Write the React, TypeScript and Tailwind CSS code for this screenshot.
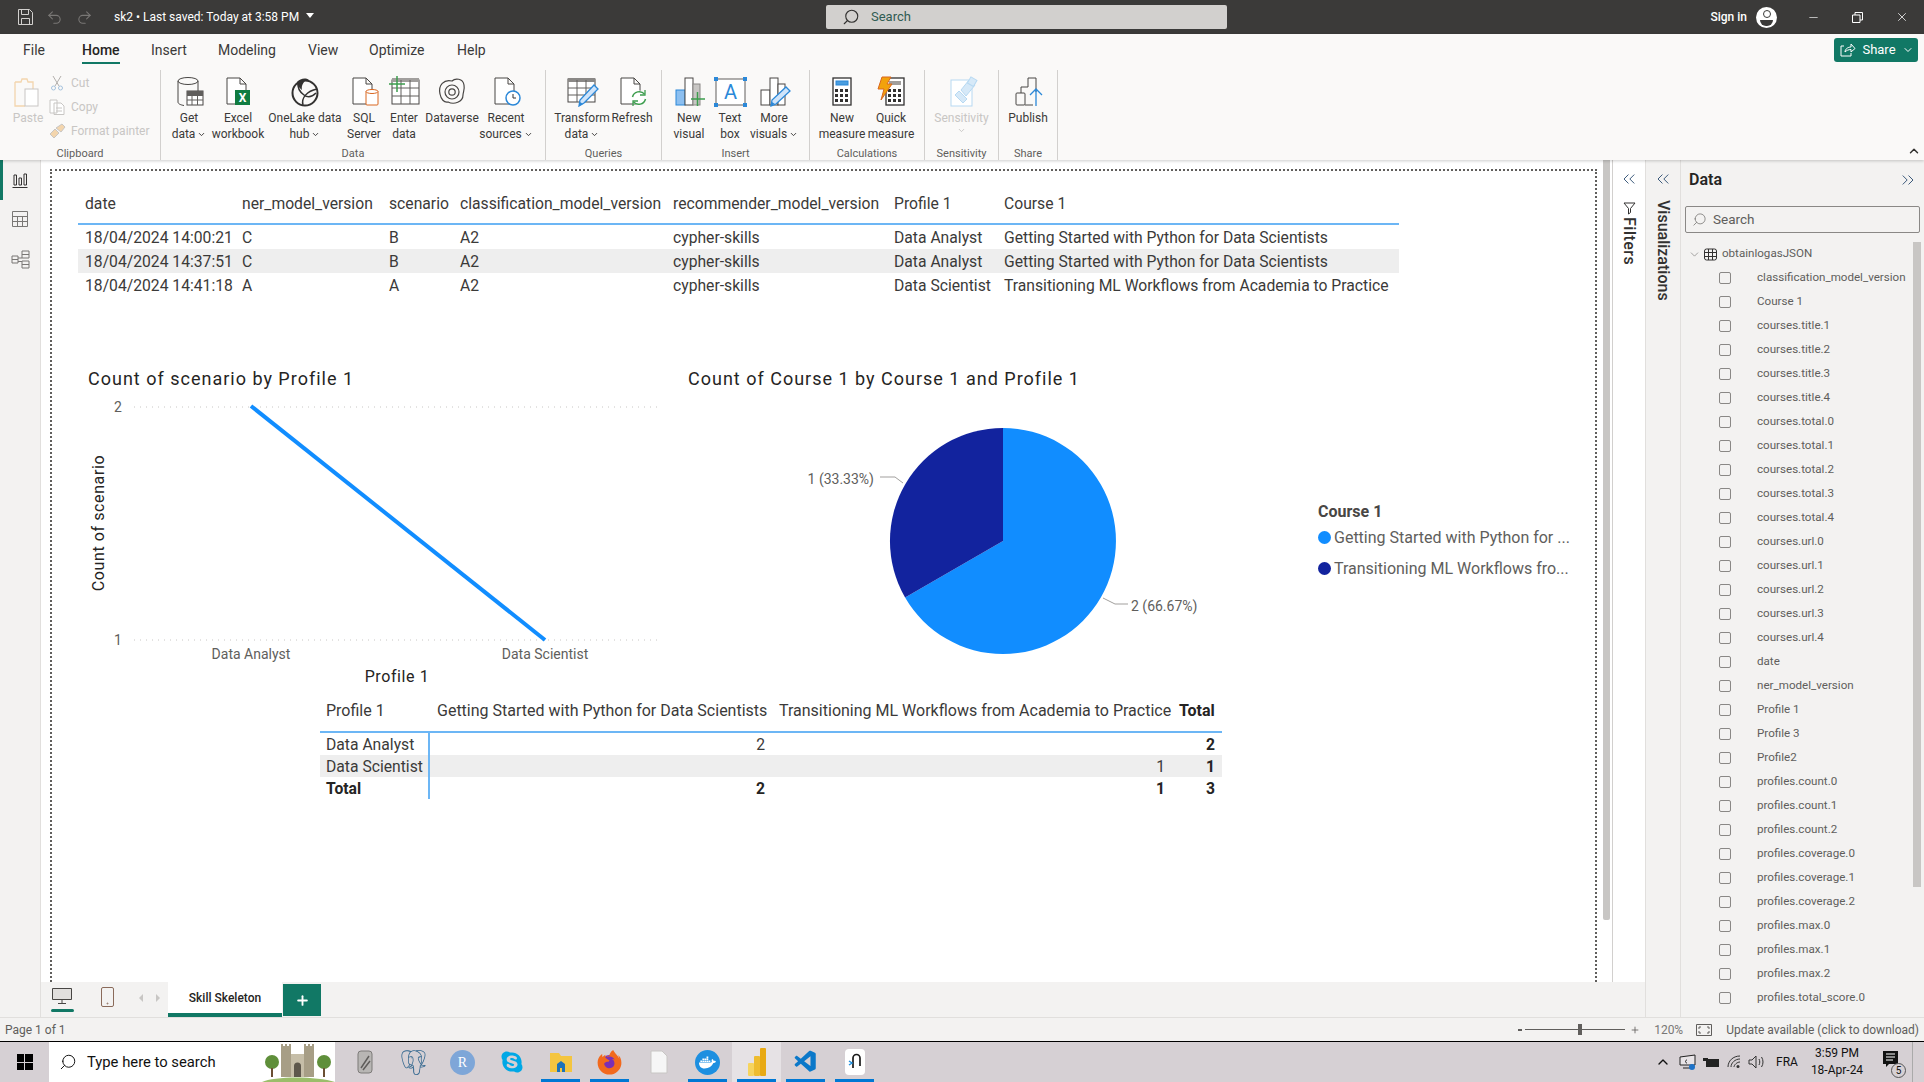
import type { ReactNode } from "react";
import {
  ChevronDown,
  ChevronUp,
  ChevronsLeft,
  ChevronsRight,
  Minus,
  Plus,
  Redo2,
  Search,
  Undo2,
  X,
} from "lucide-react";
import { FaDocker, FaFirefoxBrowser, FaSkype } from "react-icons/fa";
import { SiPostgresql } from "react-icons/si";
import { VscVscode } from "react-icons/vsc";

const Ic = ({ w = 34, children }: { w?: number; children: ReactNode }) => (
  <svg width={w} height={32} viewBox={`0 0 ${w} 32`} fill="none" stroke="#484644" strokeWidth="1">
    {children}
  </svg>
);

const Doc = ({ stroke = "#484644" }: { stroke?: string }) => (
  <path d="M6 3h13l6 6v20H6zM19 3v6h6" stroke={stroke} fill="#fff" />
);

const GetDataIcon = () => (
  <Ic>
    <g transform="translate(2 0)">
      <ellipse cx="14" cy="6" rx="10" ry="3.5" />
      <path d="M4 6v21c0 2 3 3 6 3.5M24 6v10" />
      <rect x="13" y="16" width="16" height="14" fill="#fff" stroke="#484644" />
      <path d="M13 20.500h16M13 25h16M18 16v14M23.500 16v14" stroke="#605e5c" />
      <rect x="13" y="16" width="16" height="4" fill="#605e5c" stroke="none" />
    </g>
  </Ic>
);

const ExcelIcon = () => (
  <Ic>
    <Doc />
    <rect x="14" y="15" width="15" height="15" fill="#107c41" stroke="none" />
    <text x="21.500" y="27" textAnchor="middle" fontSize="12" fontWeight="700" fill="#fff" stroke="none" fontFamily="Roboto, sans-serif">
      X
    </text>
  </Ic>
);

const OneLakeIcon = () => (
  <Ic>
    <circle cx="17" cy="18" r="12.500" stroke="#323130" strokeWidth="2" />
    <path d="M10 7a14 14 0 0 0 6 13c4 3 8 2 12-2M15 30c-2-7 4-14 14-16" stroke="#323130" strokeWidth="1.500" />
    <path d="M9 7c3-3 8-5 12-2-5 0-8 5-7 10-3-2-5-5-5-8z" fill="#323130" stroke="none" />
  </Ic>
);

const SqlIcon = () => (
  <Ic>
    <Doc />
    <rect x="19" y="16" width="12" height="14" rx="1" fill="#fff" stroke="#d9661f" />
    <ellipse cx="25" cy="16.500" rx="6" ry="2" fill="#fff" stroke="#d9661f" />
  </Ic>
);

const EnterIcon = () => (
  <Ic>
    <rect x="5" y="5" width="27" height="24" fill="#fff" />
    <rect x="5" y="3" width="27" height="4" fill="#a19f9d" stroke="none" />
    <path d="M5 13h27M5 21h27M14 5v24M23 5v24" stroke="#605e5c" />
    <path d="M2 9h16M10 1v16" stroke="#3d9d4e" strokeWidth="1.500" />
  </Ic>
);

const DataverseIcon = () => (
  <Ic>
    <path d="M5 19c-2-9 4-15 12-13 3-3 11-3 12 4 1 5-1 7-1 10 0 7-9 10-15 7-4 1-7-3-8-8z" strokeWidth="1.200" />
    <circle cx="17" cy="17" r="7" strokeWidth="1.200" />
    <circle cx="17" cy="17" r="3.200" strokeWidth="1.200" />
  </Ic>
);

const RecentIcon = () => (
  <Ic>
    <Doc />
    <circle cx="24" cy="23" r="7" fill="#fff" stroke="#2b88d8" strokeWidth="1.500" />
    <path d="M24 19v4h3" stroke="#323130" />
  </Ic>
);

const TransformIcon = () => (
  <Ic>
    <rect x="3" y="4" width="27" height="23" fill="#fff" />
    <rect x="3" y="3" width="27" height="4" fill="#8a8886" stroke="none" />
    <path d="M3 13h27M3 20h27M12 5v22M21 5v22" stroke="#605e5c" />
    <path d="M14 31l1-6 14-15 4 4-14 14z" fill="#cfe4fa" stroke="#2b88d8" strokeWidth="1.300" />
    <path d="M14 31l1-4 3 2z" fill="#2b88d8" stroke="none" />
  </Ic>
);

const RefreshIcon = () => (
  <Ic>
    <Doc />
    <circle cx="24" cy="23" r="7.500" fill="#fff" stroke="none" />
    <path d="M17.500 22a7 7 0 0 1 12-3M30.500 24a7 7 0 0 1-12 3" stroke="#3d9d4e" strokeWidth="1.500" />
    <path d="M30 15v5h-5M18 31v-5h5" stroke="#3d9d4e" strokeWidth="1.300" />
  </Ic>
);

const NewVisualIcon = () => (
  <Ic>
    <rect x="4" y="15" width="9" height="15" fill="#8cbff0" stroke="#2b88d8" />
    <rect x="13" y="3" width="8" height="27" fill="#fff" />
    <rect x="21" y="9" width="7" height="21" fill="#c8c6c4" stroke="#8a8886" />
    <path d="M19 24h14M25.500 17v14" stroke="#3d9d4e" strokeWidth="1.500" />
  </Ic>
);

const TextBoxIcon = () => (
  <Ic>
    <rect x="3" y="4" width="29" height="26" fill="#fff" stroke="#605e5c" />
    {[
      [1, 2],
      [30, 2],
      [1, 28],
      [30, 28],
    ].map(([x, y]) => (
      <rect key={x * 100 + y} x={x} y={y} width="4" height="4" fill="#2b88d8" stroke="none" />
    ))}
    <text x="17.500" y="24" textAnchor="middle" fontSize="20" fill="#2b88d8" stroke="none" fontFamily="Roboto, sans-serif">
      A
    </text>
  </Ic>
);

const MoreVisualsIcon = () => (
  <Ic>
    <rect x="4" y="15" width="9" height="15" fill="#fff" />
    <rect x="13" y="3" width="8" height="27" fill="#fff" />
    <rect x="21" y="9" width="7" height="21" fill="#fff" />
    <path d="M14 31l1-6 14-13 4 4-14 13z" fill="#cfe4fa" stroke="#2b88d8" strokeWidth="1.300" />
    <path d="M14 31l1-4 3 2z" fill="#2b88d8" stroke="none" />
  </Ic>
);

const Calc = ({ x }: { x: number }) => (
  <>
    <rect x={x} y="3" width="18" height="27" fill="#fff" stroke="#323130" strokeWidth="1.300" />
    {[14, 19, 24].map((y) =>
      [3, 8, 13].map((d) => <rect key={`${y}-${d}`} x={x + d - 1} y={y} width="3" height="3" fill="#323130" stroke="none" />),
    )}
  </>
);

const NewMeasureIcon = () => (
  <Ic>
    <Calc x={8} />
    <rect x="11" y="6" width="12" height="4" fill="#4a9ee0" stroke="#2b88d8" />
  </Ic>
);

const QuickMeasureIcon = () => (
  <Ic>
    <Calc x={12} />
    <rect x="15" y="6" width="12" height="4" fill="#a19f9d" stroke="none" />
    <path d="M8 2h9l-4 7h5L7 25l3-11H4z" fill="#f2a20c" stroke="#d9661f" />
  </Ic>
);

const SensitivityIcon = () => (
  <Ic>
    <rect x="6" y="5" width="21" height="26" fill="#fff" stroke="#b7d9f2" />
    <path d="M10 20l8 8 4-4-8-8z" fill="#d6e9f8" stroke="#b7d9f2" />
    <path d="M16 15l8-10 6 5-9 11z" fill="#d6e9f8" stroke="#b7d9f2" />
    <rect x="24" y="3" width="7" height="7" fill="#d6e9f8" stroke="#b7d9f2" transform="rotate(30 27 6)" />
  </Ic>
);

const PublishIcon = () => (
  <Ic>
    <rect x="5" y="18" width="9" height="12" rx="1" />
    <path d="M10 18v-6h7V3h8v14" />
    <path d="M14 30h8" />
    <path d="M25 31V14M19 20l6-6 6 6" stroke="#2b88d8" strokeWidth="1.300" />
  </Ic>
);

const PasteIcon = () => (
  <Ic>
    <path d="M4 7h6l1-3h5l1 3h5v7" stroke="#f3d5ad" strokeWidth="1.300" />
    <path d="M4 7v24h10" stroke="#f3d5ad" strokeWidth="1.300" />
    <rect x="14" y="14" width="13" height="17" fill="#fff" stroke="#c8c6c4" />
  </Ic>
);

type RibbonItem = { icon: ReactNode; lines: string[]; width: number; caret?: boolean; off?: boolean };

const RibbonButton = ({ item }: { item: RibbonItem }) => (
  <div className="flex flex-col items-center pt-[5px] shrink-0" style={{ width: item.width }}>
    <div className="h-[35px] flex items-start justify-center">{item.icon}</div>
    <div className={`text-center text-[12px] leading-[16px] whitespace-nowrap ${item.off ? "text-[#c8c6c4]" : "text-[#3b3a39]"}`}>
      {item.lines.map((line, i) => (
        <div key={i} className="flex items-center justify-center gap-[2px]">
          {line}
          {item.caret && i === item.lines.length - 1 && <ChevronDown size={9} strokeWidth={2.500} />}
        </div>
      ))}
    </div>
  </div>
);

const RibbonGroup = ({ label, width, pl = 0, children }: { label: string; width: number; pl?: number; children: ReactNode }) => (
  <div className="h-[90px] flex flex-col border-r border-[#d2d0ce] shrink-0" style={{ width }}>
    <div className="flex flex-1 min-h-0" style={{ paddingLeft: pl }}>
      {children}
    </div>
    <div className="h-[12px] leading-[12px] text-[11px] text-[#605e5c] text-center">{label}</div>
  </div>
);

const tabs = [
  { name: "File", width: 59 },
  { name: "Home", width: 69, active: true },
  { name: "Insert", width: 67 },
  { name: "Modeling", width: 90 },
  { name: "View", width: 61 },
  { name: "Optimize", width: 88 },
  { name: "Help", width: 40 },
];

const dataGroup: RibbonItem[] = [
  { icon: <GetDataIcon />, lines: ["Get", "data"], width: 48, caret: true },
  { icon: <ExcelIcon />, lines: ["Excel", "workbook"], width: 50 },
  { icon: <OneLakeIcon />, lines: ["OneLake data", "hub"], width: 84, caret: true },
  { icon: <SqlIcon />, lines: ["SQL", "Server"], width: 34 },
  { icon: <EnterIcon />, lines: ["Enter", "data"], width: 46 },
  { icon: <DataverseIcon />, lines: ["Dataverse"], width: 50 },
  { icon: <RecentIcon />, lines: ["Recent", "sources"], width: 58, caret: true },
];

const TitleBar = () => (
  <header className="h-[34px] bg-[#3b3a39] flex items-center text-white shrink-0">
    <div className="w-[826px] flex items-center shrink-0">
      <svg className="ml-[18px]" width="15" height="16" viewBox="0 0 15 16" fill="none" stroke="#d2d0ce">
        <path d="M.5.5h11l3 3v12H.5zM3.500.5v5h7v-5M3.500 15.500v-6h8v6" />
      </svg>
      <Undo2 className="ml-[13px] text-[#797775]" size={17} strokeWidth={1.500} />
      <Redo2 className="ml-[13px] text-[#797775]" size={17} strokeWidth={1.500} />
      <span className="ml-[21px] text-[12px]">sk2 • Last saved: Today at 3:58 PM</span>
      <span className="ml-[7px] mb-[4px] w-0 h-0 border-x-[4px] border-x-transparent border-t-[5px] border-t-white" />
    </div>
    <div className="w-[401px] h-[24px] rounded-[2px] bg-[#d2d0ce] flex items-center pl-[16px] gap-[11px] text-[#2f5c52] text-[13px] shrink-0">
      <Search size={18} className="text-[#323130] -scale-x-100" strokeWidth={1.500} />
      Search
    </div>
    <div className="flex-1 flex items-center justify-end">
      <span className="text-[12px] mr-[9px] font-medium">Sign in</span>
      <span className="w-[21px] h-[21px] rounded-full bg-white relative overflow-hidden flex justify-center">
        <span className="mt-[3px] w-[8px] h-[8px] rounded-full border-[1.500px] border-[#3b3a39]" />
        <span className="absolute bottom-[2px] w-[13px] h-[6px] rounded-b-full bg-[#3b3a39]" />
      </span>
      <Minus className="ml-[30px]" size={13} strokeWidth={1.200} />
      <svg className="ml-[32px]" width="11" height="11" viewBox="0 0 11 11" fill="none" stroke="#fff">
        <path d="M.5 3h7.500v7.500H.5zM3 3V.5h7.500V8H8" />
      </svg>
      <X className="ml-[32px] mr-[15px]" size={14} strokeWidth={1.300} />
    </div>
  </header>
);

const Ribbon = () => (
  <section className="h-[126px] bg-[#faf9f8] shrink-0 shadow-[0_1px_3px_rgba(0,0,0,0.2)] relative z-10">
    <div className="h-[36px] flex items-start justify-between">
      <nav className="flex pl-[23px] pt-[6px]">
        {tabs.map((tab) => (
          <div key={tab.name} className="shrink-0 text-[14px] text-[#3b3a39]" style={{ width: tab.width }}>
            <span className={`inline-block leading-[20px] pb-[2px] ${tab.active ? "border-b-2 border-[#117865] font-medium text-[#252423]" : ""}`}>
              {tab.name}
            </span>
          </div>
        ))}
      </nav>
      <button className="mt-[4px] mr-[6px] w-[84px] h-[24px] rounded-[3px] bg-[#117865] text-white text-[13px] flex items-center justify-center gap-[6px] pl-[2px]">
        <svg width="16" height="14" viewBox="0 0 16 14" fill="none" stroke="#fff">
          <path d="M4 3H1v10h10v-3M5 9c0-3 3-5 6-5V1l4 4.500L11 9V6.500C8.500 6.500 6.500 7.500 5 9z" />
        </svg>
        Share
        <ChevronDown size={12} />
      </button>
    </div>
    <div className="h-[90px] flex items-start">
      <RibbonGroup label="Clipboard" width={161}>
        <div className="w-[50px] pl-[6px] shrink-0 flex flex-col items-center pt-[5px]">
          <PasteIcon />
          <span className="mt-[3px] text-[12px] leading-[16px] text-[#c8c6c4]">Paste</span>
        </div>
        <div className="pt-[5px] flex flex-col gap-[8px] text-[12px] leading-[16px] text-[#c8c6c4] whitespace-nowrap">
          <div className="flex items-center gap-[5px]">
            <svg width="14" height="16" viewBox="0 0 14 16" fill="none" stroke="#a6c3de">
              <path d="M3 1l6 10M11 1L5 11" stroke="#b3b0ad" />
              <circle cx="3.500" cy="13" r="2" />
              <circle cx="10.500" cy="13" r="2" />
            </svg>
            <span className="ml-[2px]">Cut</span>
          </div>
          <div className="flex items-center gap-[5px]">
            <svg className="-ml-[1px]" width="17" height="16" viewBox="0 0 17 16" fill="none" stroke="#c8c6c4">
              <path d="M1 1h7v13H1zM5 4h7l3 3v8.500H5zM7 9h6M7 12h6" fill="#fff" />
            </svg>
            Copy
          </div>
          <div className="flex items-center gap-[5px]">
            <svg className="-ml-[1px]" width="17" height="16" viewBox="0 0 17 16" fill="#f3d5ad" stroke="#c8c6c4">
              <path d="M1 11l5-5 4 4-5 5zM7 5l6-4 3 3-4 5z" />
            </svg>
            Format painter
          </div>
        </div>
      </RibbonGroup>
      <RibbonGroup label="Data" width={385} pl={4}>
        {dataGroup.map((item) => (
          <RibbonButton key={item.lines[0]} item={item} />
        ))}
      </RibbonGroup>
      <RibbonGroup label="Queries" width={116} pl={8}>
        <RibbonButton item={{ icon: <TransformIcon />, lines: ["Transform", "data"], width: 56, caret: true }} />
        <RibbonButton item={{ icon: <RefreshIcon />, lines: ["Refresh"], width: 44 }} />
      </RibbonGroup>
      <RibbonGroup label="Insert" width={148} pl={7}>
        <RibbonButton item={{ icon: <NewVisualIcon />, lines: ["New", "visual"], width: 40 }} />
        <RibbonButton item={{ icon: <TextBoxIcon />, lines: ["Text", "box"], width: 42 }} />
        <RibbonButton item={{ icon: <MoreVisualsIcon />, lines: ["More", "visuals"], width: 46, caret: true }} />
      </RibbonGroup>
      <RibbonGroup label="Calculations" width={115} pl={5}>
        <RibbonButton item={{ icon: <NewMeasureIcon />, lines: ["New", "measure"], width: 54 }} />
        <RibbonButton item={{ icon: <QuickMeasureIcon />, lines: ["Quick", "measure"], width: 44 }} />
      </RibbonGroup>
      <RibbonGroup label="Sensitivity" width={74}>
        <RibbonButton item={{ icon: <SensitivityIcon />, lines: ["Sensitivity", ""], width: 73, caret: true, off: true }} />
      </RibbonGroup>
      <RibbonGroup label="Share" width={59}>
        <RibbonButton item={{ icon: <PublishIcon />, lines: ["Publish"], width: 58 }} />
      </RibbonGroup>
      <div className="flex-1 h-[88px] flex items-end justify-end pr-[3px]">
        <ChevronUp size={14} strokeWidth={2.500} className="text-[#323130]" />
      </div>
    </div>
  </section>
);

const LeftRail = () => (
  <aside className="w-[41px] bg-[#f3f2f1] border-r border-[#e1dfdd] shrink-0 relative flex flex-col items-center pt-[12px] gap-[23px]">
    <span className="absolute left-0 top-0 w-[3px] h-[40px] bg-[#117865]" />
    <svg width="16" height="16" viewBox="0 0 16 16" fill="none" stroke="#323130">
      <path d="M.5 15.500h15M2 13V3h2.500v10zM7 13V6h2.500v7zM12 13V2h2.500v11z" />
    </svg>
    <svg width="16" height="16" viewBox="0 0 16 16" fill="none" stroke="#797775">
      <path d="M.5.5h15v15H.5zM.5 5.500h15M.5 10.500h15M5.500 5.500v10M10.500 5.500v10" />
    </svg>
    <svg width="19" height="19" viewBox="0 0 19 19" fill="none" stroke="#797775">
      <path d="M1 6h6v7H1zM1 9.500h6M11 1h7v7h-7zM11 4.500h7M11 11h7v7h-7zM11 14.500h7M7 8h4M7 11.500h4" />
    </svg>
  </aside>
);

const columns = ["date", "ner_model_version", "scenario", "classification_model_version", "recommender_model_version", "Profile 1", "Course 1"];
const rows = [
  ["18/04/2024 14:00:21", "C", "B", "A2", "cypher-skills", "Data Analyst", "Getting Started with Python for Data Scientists"],
  ["18/04/2024 14:37:51", "C", "B", "A2", "cypher-skills", "Data Analyst", "Getting Started with Python for Data Scientists"],
  ["18/04/2024 14:41:18", "A", "A", "A2", "cypher-skills", "Data Scientist", "Transitioning ML Workflows from Academia to Practice"],
];

const LogTable = () => (
  <div className="ml-[26px] mt-[21px] w-[1321px] text-[15.700px] text-[#3b3a39]">
    <div className="grid grid-cols-[157px_147px_71px_213px_221px_110px_402px] h-[33px] border-b-2 border-[#6cb6f5]">
      {columns.map((col) => (
        <div key={col} className="pl-[7px] leading-[24px] whitespace-nowrap">
          {col}
        </div>
      ))}
    </div>
    {rows.map((row, i) => (
      <div key={row[0]} className={`grid grid-cols-[157px_147px_71px_213px_221px_110px_402px] h-[24px] ${i === 1 ? "bg-[#eeeeee]" : ""}`}>
        {row.map((cell, j) => (
          <div key={j} className="pl-[7px] pt-[1px] leading-[24px] whitespace-nowrap">
            {cell}
          </div>
        ))}
      </div>
    ))}
  </div>
);

const ChartTitle = ({ children }: { children: ReactNode }) => (
  <div className="h-[26px] leading-[26px] text-[18px] tracking-[1px] text-[#252423] whitespace-nowrap">{children}</div>
);

const LineChart = () => (
  <div className="w-[610px] shrink-0">
    <div className="pl-[10px]">
      <ChartTitle>Count of scenario by Profile 1</ChartTitle>
    </div>
    <svg width="610" height="296" viewBox="78 392 610 296" fontFamily="Roboto, sans-serif">
      <line x1="134" y1="407" x2="657" y2="407" stroke="#c8c6c4" strokeDasharray="1 5" />
      <line x1="134" y1="640" x2="657" y2="640" stroke="#c8c6c4" strokeDasharray="1 5" />
      <text x="118" y="412" textAnchor="middle" fontSize="14" fill="#605e5c">2</text>
      <text x="118" y="645" textAnchor="middle" fontSize="14" fill="#605e5c">1</text>
      <line x1="251" y1="406" x2="545" y2="640" stroke="#118dff" strokeWidth="4" />
      <text x="251" y="659" textAnchor="middle" fontSize="14" fill="#605e5c">Data Analyst</text>
      <text x="545" y="659" textAnchor="middle" fontSize="14" fill="#605e5c">Data Scientist</text>
      <text x="397" y="682" textAnchor="middle" fontSize="16" letterSpacing="0.6" fill="#252423">Profile 1</text>
      <text x="104" y="523" textAnchor="middle" fontSize="16" letterSpacing="0.6" fill="#252423" transform="rotate(-90 104 523)">Count of scenario</text>
    </svg>
  </div>
);

const PieChart = () => (
  <div className="w-[630px] shrink-0">
    <ChartTitle>Count of Course 1 by Course 1 and Profile 1</ChartTitle>
    <svg width="630" height="296" viewBox="688 392 630 296" fontFamily="Roboto, sans-serif">
      <path d="M1003 541V428A113 113 0 1 1 905.100 597.500Z" fill="#118dff" />
      <path d="M1003 541L905.100 597.500A113 113 0 0 1 1003 428Z" fill="#12239e" />
      <path d="M880 477h15l8 6M1103 598l12 6h13" stroke="#a19f9d" fill="none" />
      <text x="874" y="484" textAnchor="end" fontSize="14" fill="#605e5c">1 (33.33%)</text>
      <text x="1131" y="611" fontSize="14" fill="#605e5c">2 (66.67%)</text>
    </svg>
  </div>
);

const Legend = () => (
  <div className="mt-[136px] text-[16px] text-[#605e5c] whitespace-nowrap">
    <div className="h-[20px] leading-[20px] font-bold text-[16px] text-[#484644]">Course 1</div>
    <div className="h-[31px] flex items-center gap-[3px]">
      <span className="w-[13px] h-[13px] rounded-full bg-[#118dff]" />
      Getting Started with Python for ...
    </div>
    <div className="h-[31px] flex items-center gap-[3px]">
      <span className="w-[13px] h-[13px] rounded-full bg-[#12239e]" />
      Transitioning ML Workflows fro...
    </div>
  </div>
);

const matrixCols = "grid grid-cols-[110px_342px_400px_50px]";

const Matrix = () => (
  <div className="ml-[268px] mt-[8px] w-[902px] text-[15.700px] text-[#3b3a39] leading-[20px] whitespace-nowrap">
    <div className={`${matrixCols} h-[37px] border-b-2 border-[#6cb6f5] pt-[5px] text-[16px]`}>
      <div className="pl-[6px]">Profile 1</div>
      <div className="pl-[7px]">Getting Started with Python for Data Scientists</div>
      <div className="pl-[7px]">Transitioning ML Workflows from Academia to Practice</div>
      <div className="pl-[7px] font-bold text-[#252423]">Total</div>
    </div>
    <div className={`${matrixCols} h-[22px]`}>
      <div className="pl-[6px] pt-[2px] border-r-2 border-[#6cb6f5]">Data Analyst</div>
      <div className="pr-[7px] pt-[2px] text-right">2</div>
      <div />
      <div className="pr-[7px] pt-[2px] text-right font-bold text-[#252423]">2</div>
    </div>
    <div className={`${matrixCols} h-[22px] bg-[#eeeeee]`}>
      <div className="pl-[6px] pt-[2px] border-r-2 border-[#6cb6f5]">Data Scientist</div>
      <div />
      <div className="pr-[7px] pt-[2px] text-right">1</div>
      <div className="pr-[7px] pt-[2px] text-right font-bold text-[#252423]">1</div>
    </div>
    <div className={`${matrixCols} h-[22px] font-bold text-[#252423]`}>
      <div className="pl-[6px] pt-[2px] border-r-2 border-[#6cb6f5]">Total</div>
      <div className="pr-[7px] pt-[2px] text-right">2</div>
      <div className="pr-[7px] pt-[2px] text-right">1</div>
      <div className="pr-[7px] pt-[2px] text-right">3</div>
    </div>
  </div>
);

const Canvas = () => (
  <div className="flex-1 min-h-0 flex bg-white">
    <div className="w-[1561px] shrink-0 overflow-hidden pl-[9px] pt-[9px]">
      <div className="w-[1547px] h-[900px] border-2 border-dotted border-[#605e5c]">
        <LogTable />
        <div className="ml-[26px] mt-[69px] flex h-[322px]">
          <LineChart />
          <PieChart />
          <Legend />
        </div>
        <Matrix />
      </div>
    </div>
    <div className="w-[10px] shrink-0 pl-[1px]">
      <div className="w-[7px] h-[760px] bg-[#c8c6c4] rounded-b-[2px]" />
    </div>
  </div>
);

const FiltersPane = () => (
  <div className="w-[33px] bg-white border-l border-[#d2d0ce] shrink-0 flex flex-col items-center pt-[9px] text-[#323130]">
    <ChevronsLeft size={20} strokeWidth={1.100} className="text-[#2b4b70]" />
    <svg className="mt-[13px]" width="13" height="13" viewBox="0 0 13 13" fill="none" stroke="#323130">
      <path d="M1 1h11L7.500 6.500v4L5.500 12V6.500z" />
    </svg>
    <span className="[writing-mode:vertical-rl] text-[16px] tracking-[0.5px] font-medium mt-[2px] leading-none">Filters</span>
  </div>
);

const TabBar = () => (
  <div className="h-[35px] bg-[#f3f2f1] flex items-stretch shrink-0">
    <div className="w-[42px] pt-[6px] flex flex-col items-center shrink-0">
      <svg width="20" height="16" viewBox="0 0 20 16" fill="none" stroke="#484644">
        <path d="M.5.5h19v11H.5z" fill="#e1dfdd" />
        <path d="M10 12v3M6 15.500h8" />
      </svg>
      <span className="mt-[5px] w-[23px] h-[3px] bg-[#117865] rounded-[2px]" />
    </div>
    <div className="w-[48px] pt-[5px] flex justify-center shrink-0">
      <svg width="13" height="20" viewBox="0 0 13 20" fill="none" stroke="#8a6a5a">
        <rect x=".5" y=".5" width="12" height="19" rx="1.500" />
        <circle cx="6.500" cy="16.500" r=".5" />
      </svg>
    </div>
    <div className="w-[37px] flex items-center justify-center gap-[13px] pb-[3px] shrink-0">
      <span className="w-0 h-0 border-y-[4px] border-y-transparent border-r-[4px] border-r-[#c8c6c4]" />
      <span className="w-0 h-0 border-y-[4px] border-y-transparent border-l-[4px] border-l-[#c8c6c4]" />
    </div>
    <div className="w-[114px] bg-white border-b-4 border-[#117865] flex items-center justify-center text-[12px] font-medium text-[#252423] shrink-0">
      Skill Skeleton
    </div>
    <div className="ml-[1px] mt-[2px] mb-[1px] w-[38px] bg-[#117865] flex items-center justify-center text-white">
      <Plus size={15} strokeWidth={3} />
    </div>
  </div>
);

const fields = [
  "classification_model_version",
  "Course 1",
  "courses.title.1",
  "courses.title.2",
  "courses.title.3",
  "courses.title.4",
  "courses.total.0",
  "courses.total.1",
  "courses.total.2",
  "courses.total.3",
  "courses.total.4",
  "courses.url.0",
  "courses.url.1",
  "courses.url.2",
  "courses.url.3",
  "courses.url.4",
  "date",
  "ner_model_version",
  "Profile 1",
  "Profile 3",
  "Profile2",
  "profiles.count.0",
  "profiles.count.1",
  "profiles.count.2",
  "profiles.coverage.0",
  "profiles.coverage.1",
  "profiles.coverage.2",
  "profiles.max.0",
  "profiles.max.1",
  "profiles.max.2",
  "profiles.total_score.0",
];

const DataPane = () => (
  <aside className="w-[244px] bg-[#f3f2f1] border-l border-[#e1dfdd] shrink-0 flex flex-col">
    <div className="h-[40px] flex items-center justify-between pl-[8px] pr-[6px] shrink-0">
      <span className="text-[16px] font-semibold text-[#252423]">Data</span>
      <ChevronsRight size={20} strokeWidth={1.100} className="text-[#2b4b70]" />
    </div>
    <div className="mx-[4px] mt-[6px] w-[235px] h-[27px] rounded-[2px] border border-[#8a8886] flex items-center pl-[6px] gap-[6px] text-[13.500px] text-[#605e5c] shrink-0">
      <Search size={15} strokeWidth={1.300} className="text-[#797775] -scale-x-100" />
      Search
    </div>
    <div className="flex-1 min-h-0 flex pt-[9px] overflow-hidden">
      <div className="w-[232px] shrink-0">
        <div className="h-[24px] flex items-center pl-[7px] text-[11.600px] text-[#605e5c]">
          <ChevronDown size={13} strokeWidth={1.200} className="text-[#797775]" />
          <svg className="ml-[3px]" width="13" height="13" viewBox="0 0 13 13" fill="none" stroke="#323130">
            <rect x=".5" y="1" width="12" height="11" rx="2" />
            <path d="M4.500 1v11M8.500 1v11M.5 4.500h12M.5 8.500h12" />
          </svg>
          <span className="ml-[5px]">obtainlogasJSON</span>
        </div>
        {fields.map((field) => (
          <div key={field} className="h-[24px] flex items-center text-[11.600px] text-[#605e5c] whitespace-nowrap">
            <span className="ml-[38px] w-[12px] h-[12px] rounded-[2px] border border-[#8a8886] bg-[#f3f2f1] shrink-0" />
            <span className="ml-[26px]">{field}</span>
          </div>
        ))}
      </div>
      <div className="w-[8px] h-[645px] bg-[#c8c6c4]" />
    </div>
  </aside>
);

const StatusBar = () => (
  <footer className="h-[24px] bg-[#f3f2f1] border-t border-[#e1dfdd] flex items-center justify-between text-[12px] text-[#605e5c] shrink-0">
    <span className="pl-[5px]">Page 1 of 1</span>
    <div className="flex items-center pr-[5px]">
      <span className="w-[4px] h-[2px] bg-[#605e5c]" />
      <span className="ml-[3px] w-[100px] h-px bg-[#605e5c] relative">
        <span className="absolute left-[53px] -top-[5px] w-[4px] h-[11px] bg-[#605e5c]" />
      </span>
      <Plus className="ml-[5px]" size={10} />
      <span className="ml-[14px] text-[#797775]">120%</span>
      <svg className="ml-[13px]" width="16" height="12" viewBox="0 0 16 12" fill="none" stroke="#605e5c">
        <path d="M.5.5h15v11H.5zM5 3H3v2M11 3h2v2M5 9H3V7M11 9h2V7" />
      </svg>
      <span className="ml-[14px] whitespace-nowrap">Update available (click to download)</span>
    </div>
  </footer>
);

const AppTile = ({ children, run, active }: { children: ReactNode; run?: boolean; active?: boolean }) => (
  <div className={`w-[49px] h-full flex items-center justify-center relative ${active ? "bg-[#e6e2e5]" : ""}`}>
    {children}
    {run && <span className="absolute bottom-0 left-[5px] right-[5px] h-[3px] bg-[#0078d4]" />}
  </div>
);

const Taskbar = () => (
  <div className="h-[41px] bg-[#d6d0d4] border-t border-black flex items-stretch shrink-0 text-[#111]">
    <div className="w-[49px] flex items-center justify-center shrink-0">
      <div className="grid grid-cols-2 gap-[1px] w-[16px] h-[16px]">
        <span className="bg-black" />
        <span className="bg-black" />
        <span className="bg-black" />
        <span className="bg-black" />
      </div>
    </div>
    <div className="w-[286px] bg-white flex items-center overflow-hidden shrink-0">
      <Search size={18} strokeWidth={1.300} className="ml-[10px] -scale-x-100" />
      <span className="ml-[10px] text-[14.800px] flex-1">Type here to search</span>
      <svg width="73" height="40" viewBox="0 0 73 40" className="shrink-0">
        <path d="M0 40c12-6 55-6 73 0z" fill="#9bbd6a" />
        <path d="M19 2h2v2h2V2h2v2h2V2h2v33H19z" fill="#a79e86" />
        <path d="M42 2h2v2h2V2h2v2h2V2h2v33H42z" fill="#a79e86" />
        <rect x="29" y="12" width="13" height="23" fill="#c6bea8" />
        <path d="M32 35V24a3.500 3.500 0 0 1 7 0v11z" fill="#5e584c" />
        <circle cx="10" cy="20" r="7" fill="#5f8f3a" />
        <rect x="9" y="26" width="2" height="9" fill="#6b4f33" />
        <circle cx="62" cy="20" r="7" fill="#5f8f3a" />
        <rect x="61" y="26" width="2" height="9" fill="#6b4f33" />
      </svg>
    </div>
    <div className="ml-[5px] flex items-stretch shrink-0">
      <AppTile>
        <svg width="16" height="28" viewBox="0 0 16 28">
          <rect x="1" y="3" width="14" height="22" rx="3" fill="#b8b6b4" stroke="#7d7b79" />
          <path d="M4 20L12 8M6 22l7-9" stroke="#5f5d5b" strokeWidth="1.500" />
        </svg>
      </AppTile>
      <AppTile>
        <SiPostgresql size={25} className="text-[#33678f]" />
      </AppTile>
      <AppTile>
        <span className="w-[25px] h-[25px] rounded-full bg-[#7ea6d8] text-white text-[14px] flex items-center justify-center font-['Liberation_Serif',serif]">R</span>
      </AppTile>
      <AppTile>
        <FaSkype size={24} className="text-[#00a8e6]" />
      </AppTile>
      <AppTile run>
        <svg width="24" height="24" viewBox="0 0 24 24">
          <path d="M1 3h9l2 3h11v16H1z" fill="#f4c53f" />
          <path d="M8 22v-8l4-3 4 3v8h-3v-4h-2v4z" fill="#1d72b8" />
        </svg>
      </AppTile>
      <AppTile run>
        <span className="relative flex items-center justify-center">
          <span className="absolute w-[15px] h-[15px] rounded-full bg-[#7b2fb5]" />
          <FaFirefoxBrowser size={25} className="relative text-[#f2691d]" />
        </span>
      </AppTile>
      <AppTile>
        <svg width="18" height="24" viewBox="0 0 18 24">
          <path d="M1 1h11l5 5v17H1z" fill="#f6f6f6" stroke="#c8c6c4" />
        </svg>
      </AppTile>
      <AppTile run>
        <span className="w-[25px] h-[25px] rounded-full bg-[#1d8fe0] flex items-center justify-center">
          <FaDocker size={17} className="text-white" />
        </span>
      </AppTile>
      <AppTile run active>
        <svg width="20" height="28" viewBox="0 0 20 28">
          <rect x="1" y="15" width="6" height="13" rx="1" fill="#f6d45e" />
          <rect x="7" y="8" width="6" height="20" rx="1" fill="#eebc2f" />
          <rect x="13" y="0" width="6" height="28" rx="1" fill="#e8a913" />
        </svg>
      </AppTile>
      <AppTile run>
        <VscVscode size={26} className="text-[#0b78c9]" />
      </AppTile>
      <AppTile run>
        <span className="w-[20px] h-[26px] rounded-[4px] bg-white flex items-center justify-center text-[13px] font-bold text-[#1b1b1b]">
          <svg width="14" height="18" viewBox="0 0 14 18" fill="none">
            <path d="M5 15V5a3 3 0 0 1 7 0v8" stroke="#1b1b1b" strokeWidth="1.700" />
            <path d="M1 8l3 2-3 2" stroke="#1d8fe0" strokeWidth="1.500" />
          </svg>
        </span>
      </AppTile>
    </div>
    <div className="ml-auto flex items-center shrink-0">
      <span className="w-[24px] flex justify-center">
        <ChevronUp size={16} />
      </span>
      <span className="w-[24px] flex justify-center">
        <svg width="17" height="17" viewBox="0 0 17 17" fill="none" stroke="#222">
          <path d="M1 3l15-2v10H1z" fill="#e8e4e7" />
          <path d="M4 14h7M8 6c-2 0-2 3 0 3" />
          <circle cx="13" cy="13" r="3" fill="#1d72c8" stroke="none" />
        </svg>
      </span>
      <span className="w-[24px] flex justify-center">
        <svg width="16" height="11" viewBox="0 0 16 11">
          <rect x="3" y="2" width="13" height="8" fill="#222" />
          <path d="M0 1h5v3H0z" fill="#222" />
        </svg>
      </span>
      <span className="w-[22px] flex justify-center">
        <svg width="14" height="14" viewBox="0 0 14 14" fill="none" stroke="#333">
          <path d="M1 12C1 6 6 1 13 1M4 12c0-4 4-8 9-8M7 12c0-2 3-5 6-5" />
          <circle cx="11" cy="11.500" r="1.500" fill="#333" stroke="none" />
        </svg>
      </span>
      <span className="w-[22px] flex justify-center">
        <svg width="17" height="14" viewBox="0 0 17 14" fill="none" stroke="#333">
          <path d="M1 5h3l4-4v12L4 9H1zM11 4c1 2 1 4 0 6M13.500 2c2 3 2 7 0 10" />
        </svg>
      </span>
      <span className="w-[40px] text-center text-[12px]">FRA</span>
      <span className="w-[60px] text-center text-[12px] leading-[17px] whitespace-nowrap">
        3:59 PM
        <br />
        18-Apr-24
      </span>
      <span className="w-[45px] flex justify-center pl-[8px] relative">
        <svg width="24" height="26" viewBox="0 0 24 26">
          <path d="M1 2h15v13H7l-3 3v-3H1z" fill="#111" />
          <path d="M4 5h9M4 8h9M4 11h7" stroke="#fff" />
        </svg>
        <span className="absolute right-[6px] bottom-[-3px] w-[15px] h-[15px] rounded-full border border-[#555] bg-[#d6d0d4] text-[10px] leading-[13px] text-center">5</span>
      </span>
      <span className="w-[12px] h-full border-l border-[#aaa]" />
    </div>
  </div>
);

export default function App() {
  return (
    <div className="w-[1924px] h-[1082px] overflow-hidden flex flex-col font-[family-name:Roboto,sans-serif] bg-[#f3f2f1]">
      <TitleBar />
      <Ribbon />
      <main className="h-[857px] flex shrink-0">
        <LeftRail />
        <div className="w-[1604px] shrink-0 flex flex-col">
          <div className="flex-1 min-h-0 flex">
            <Canvas />
            <FiltersPane />
          </div>
          <TabBar />
        </div>
        <div className="w-[35px] bg-[#f3f2f1] border-l border-[#e1dfdd] shrink-0 flex flex-col items-center pt-[9px] text-[#323130]">
          <ChevronsLeft size={20} strokeWidth={1.100} className="text-[#2b4b70]" />
          <span className="[writing-mode:vertical-rl] text-[16px] font-medium mt-[11px] leading-none">Visualizations</span>
        </div>
        <DataPane />
      </main>
      <StatusBar />
      <Taskbar />
    </div>
  );
}
